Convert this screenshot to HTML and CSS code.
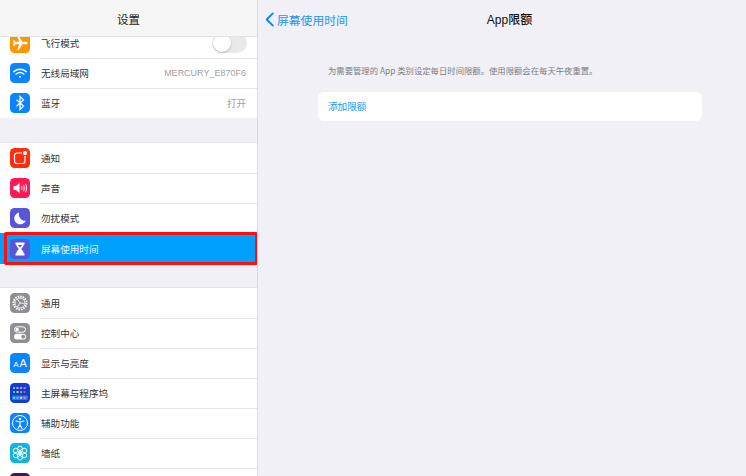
FILE: index.html
```html
<!DOCTYPE html>
<html lang="zh-CN">
<head>
    <meta charset="UTF-8">
    <title>App限额</title>
    <link rel="stylesheet" href="styles.css">
</head>
<body>
    <div class="app">
        <aside class="sidebar">
            <header class="side-head">设置</header>
            <div class="side-list">
                <section class="group">
                    <div class="row">
                        <span class="icon orange">
                            <svg viewBox="0 0 20 20"><path d="M17.600 10c0-.8-.8-1.300-1.700-1.300h-3.500L8.700 3H7.300l1.900 5.700H5.500L4.200 7H3l.7 3-.7 3h1.200l1.300-1.700h3.700L7.300 17h1.400l3.700-5.700h3.500c.9 0 1.700-.5 1.700-1.300z" fill="#fff"/></svg>
                        </span>
                        <span class="label">飞行模式</span>
                        <span class="toggle"><span class="knob"></span></span>
                    </div>
                    <div class="row">
                        <span class="icon blue">
                            <svg viewBox="0 0 20 20" fill="none" stroke="#fff" stroke-width="1.500" stroke-linecap="round"><path d="M3.800 8.600c3.500-3 8.900-3 12.400 0"/><path d="M6.200 11c2.200-1.800 5.400-1.800 7.600 0"/><circle cx="10" cy="13.800" r="1" fill="#fff" stroke="none"/></svg>
                        </span>
                        <span class="label">无线局域网</span>
                        <span class="value ssid">MERCURY_E870F6</span>
                    </div>
                    <div class="row">
                        <span class="icon blue">
                            <svg viewBox="0 0 20 20" fill="none" stroke="#fff" stroke-width="1.300"><path d="M6.500 6.800l7 6.300-3.500 3.400V3.500l3.500 3.400-7 6.300"/></svg>
                        </span>
                        <span class="label">蓝牙</span>
                        <span class="value">打开</span>
                    </div>
                </section>

                <section class="group">
                    <div class="row">
                        <span class="icon red">
                            <svg viewBox="0 0 20 20" fill="none"><rect x="4.500" y="5" width="10.500" height="10.500" rx="2.500" stroke="#fff" stroke-width="1.200"/><circle cx="15" cy="5" r="2.600" fill="#fff" stroke="#ff2d0d"/></svg>
                        </span>
                        <span class="label">通知</span>
                    </div>
                    <div class="row">
                        <span class="icon pink">
                            <svg viewBox="0 0 20 20" fill="none" stroke="#fff"><path d="M3.500 8h2.300l3.700-3v10l-3.700-3H3.500z" fill="#fff" stroke="none"/><path d="M11.500 8c.6 1.300.6 2.700 0 4M13.500 6.800c1 2.100 1 4.300 0 6.400M15.500 5.800c1.400 2.800 1.400 5.600 0 8.400" stroke-width="1"/></svg>
                        </span>
                        <span class="label">声音</span>
                    </div>
                    <div class="row">
                        <span class="icon indigo">
                            <svg viewBox="0 0 20 20"><path d="M9 4.500a6 6 0 1 0 6.800 8.200c-3.900.8-7.700-3-6.800-8.200z" fill="#fff"/></svg>
                        </span>
                        <span class="label">勿扰模式</span>
                    </div>
                    <div class="row active">
                        <span class="icon indigo">
                            <svg viewBox="0 0 20 20"><path d="M5.500 3.500h9v2h-.8c0 2.200-1.700 3.300-2.500 4.500.8 1.200 2.500 2.300 2.500 4.500h.8v2h-9v-2h.8c0-2.200 1.700-3.300 2.500-4.500-.8-1.200-2.500-2.300-2.500-4.500h-.8z" fill="#fff"/><path d="M8 6h4c-.3 1-1.300 1.800-2 2.600C9.300 7.800 8.300 7 8 6z" fill="#5856d6"/></svg>
                        </span>
                        <span class="label">屏幕使用时间</span>
                    </div>
                </section>

                <section class="group">
                    <div class="row">
                        <span class="icon gray">
                            <svg viewBox="0 0 20 20" fill="none" stroke="#fff"><circle cx="10" cy="10" r="6.500" stroke-width="2" stroke-dasharray="1.500 1"/><circle cx="10" cy="10" r="5" stroke-width=".8"/><path d="M10 10L7.500 6M10 10l4.500 .5M10 10l-2.500 4" stroke-width=".8"/></svg>
                        </span>
                        <span class="label">通用</span>
                    </div>
                    <div class="row">
                        <span class="icon gray">
                            <svg viewBox="0 0 20 20" fill="none"><rect x="4.500" y="3.800" width="11" height="5.400" rx="2.700" stroke="#fff"/><circle cx="7.200" cy="6.500" r="1.800" fill="#fff"/><rect x="4" y="10.800" width="12" height="5.800" rx="2.900" fill="#fff"/><circle cx="13.200" cy="13.700" r="1.900" fill="#8e8e93"/></svg>
                        </span>
                        <span class="label">控制中心</span>
                    </div>
                    <div class="row">
                        <span class="icon blue">
                            <span class="aa"><small>A</small>A</span>
                        </span>
                        <span class="label">显示与亮度</span>
                    </div>
                    <div class="row">
                        <span class="icon navy">
                            <svg viewBox="0 0 20 20">
                                <rect x="3" y="4" width="2" height="2" fill="#9ad"/><rect x="6.500" y="4" width="2" height="2" fill="#f9a"/><rect x="10" y="4" width="2" height="2" fill="#c8f"/><rect x="13.500" y="4" width="2" height="2" fill="#f6c"/>
                                <rect x="3" y="8" width="2" height="2" fill="#4cf"/><rect x="6.500" y="8" width="2" height="2" fill="#fc3"/><rect x="10" y="8" width="2" height="2" fill="#3d8"/><rect x="13.500" y="8" width="2" height="2" fill="#f44"/>
                                <rect x="2" y="12.500" width="16" height="4.500" rx="1" fill="#3a6ff0"/><rect x="3" y="13.800" width="2" height="2" fill="#4e9"/><rect x="6.500" y="13.800" width="2" height="2" fill="#4cf"/><rect x="10" y="13.800" width="2" height="2" fill="#ddd"/><rect x="13.500" y="13.800" width="2" height="2" fill="#f93"/>
                            </svg>
                        </span>
                        <span class="label">主屏幕与程序坞</span>
                    </div>
                    <div class="row">
                        <span class="icon blue">
                            <svg viewBox="0 0 20 20" fill="none" stroke="#fff"><circle cx="10" cy="10" r="7.500" stroke-width="1"/><circle cx="10" cy="6" r="1.200" fill="#fff" stroke="none"/><path d="M6 8l4 1 4-1M10 9v3l-2 3.500M10 12l2 3.500" stroke-width="1.200" stroke-linecap="round"/></svg>
                        </span>
                        <span class="label">辅助功能</span>
                    </div>
                    <div class="row">
                        <span class="icon teal">
                            <svg viewBox="0 0 20 20" fill="none" stroke="#fff" stroke-width=".9"><ellipse cx="10" cy="6.500" rx="2.500" ry="3.500"/><ellipse cx="10" cy="13.500" rx="2.500" ry="3.500"/><ellipse cx="6.700" cy="8.200" rx="2.500" ry="3.500" transform="rotate(-60 6.700 8.200)"/><ellipse cx="13.300" cy="8.200" rx="2.500" ry="3.500" transform="rotate(60 13.300 8.200)"/><ellipse cx="6.700" cy="11.800" rx="2.500" ry="3.500" transform="rotate(60 6.700 11.800)"/><ellipse cx="13.300" cy="11.800" rx="2.500" ry="3.500" transform="rotate(-60 13.300 11.800)"/></svg>
                        </span>
                        <span class="label">墙纸</span>
                    </div>
                    <div class="row">
                        <span class="icon dark"></span>
                    </div>
                </section>
            </div>
            <div class="highlight"></div>
        </aside>

        <main class="detail">
            <header class="detail-head">
                <a class="back">
                    <svg viewBox="0 0 10 16" fill="none" stroke="#0a84ff" stroke-width="2" stroke-linecap="round" stroke-linejoin="round"><path d="M8 1.500L1.500 8 8 14.500"/></svg>
                    屏幕使用时间
                </a>
                <h1 class="title">App限额</h1>
            </header>
            <div class="detail-body">
                <p class="note">为需要管理的 App 类别设定每日时间限额。使用限额会在每天午夜重置。</p>
                <div class="card">添加限额</div>
            </div>
        </main>
    </div>
</body>
</html>
```

FILE: styles.css
```css
* {
    margin: 0;
    box-sizing: border-box;
}

body {
    font-family: "Noto Sans CJK SC", "Liberation Sans", sans-serif;
    width: 746px;
    height: 476px;
    overflow: hidden;
    background: #f0f0f6;
}

.app {
    display: flex;
    height: 476px;
}

.sidebar {
    position: relative;
    flex: 0 0 258px;
    height: 476px;
    overflow: hidden;
    background: #f0f0f6;
    border-right: 1px solid #dcdce0;
}

.side-head {
    position: relative;
    z-index: 1;
    height: 37px;
    padding-top: 11px;
    font-size: 11.500px;
    line-height: 16px;
    text-align: center;
    color: #222;
    background: #f6f6f7;
    border-bottom: 1px solid #e4e4e6;
}

.side-list {
    margin-top: -9px;
    display: flex;
    flex-direction: column;
    gap: 24px;
}

.group {
    background: #fff;
    box-shadow: 0 -1px 0 #e4e4e8;
}

.group:first-child {
    margin-bottom: 1px;
}

.row {
    display: flex;
    align-items: center;
    height: 30px;
    padding: 0 6px 0 10px;
    position: relative;
    font-size: 9.600px;
    color: #333;
}

.row + .row::before {
    content: "";
    position: absolute;
    top: 0;
    left: 40px;
    right: 0;
    height: 1px;
    background: #e6e6e8;
}

.row.active {
    height: 31px;
    background: #00a0ff;
    color: #e4f4ff;
}

.row.active::before {
    display: none;
}

.icon {
    flex: 0 0 20px;
    width: 20px;
    height: 20px;
    border-radius: 4.500px;
    display: flex;
    align-items: center;
    justify-content: center;
}

.icon svg {
    width: 20px;
    height: 20px;
}

.orange { background: #ff9500; }
.blue { background: #0a84ff; }
.red { background: #ff2d0d; }
.pink { background: #ff1a55; }
.indigo { background: #5856d6; }
.gray { background: #8e8e93; }
.navy { background: #0f3fd0; }
.teal { background: #12b4dc; }
.dark { background: #3a1a5a; }

.aa {
    font-family: "Liberation Sans", sans-serif;
    font-size: 11px;
    color: #fff;
}

.aa small {
    font-size: 8px;
    margin-right: 1px;
}

.label {
    margin-left: 11px;
    flex: 1;
}

.value {
    color: #a0a0a4;
    font-size: 9.500px;
    margin-right: 5px;
}

.value.ssid {
    font-family: "Liberation Sans", sans-serif;
    font-size: 9px;
}

.toggle {
    width: 35px;
    height: 20px;
    margin-right: 4px;
    border-radius: 10px;
    background: #e9e9eb;
    padding: 1px;
}

.knob {
    display: block;
    width: 18px;
    height: 18px;
    border-radius: 50%;
    background: #fff;
    box-shadow: 0 1px 2px rgba(0, 0, 0, .25);
}

.highlight {
    position: absolute;
    left: 4px;
    top: 232px;
    width: 254px;
    height: 33px;
    border: 3px solid #ff1010;
    border-radius: 2px;
    z-index: 2;
}

.detail {
    flex: 1;
    min-width: 0;
}

.detail-head {
    position: relative;
    height: 38px;
    padding-left: 15px;
    display: flex;
    align-items: center;
    justify-content: center;
}

.back {
    position: absolute;
    left: 7px;
    top: 11px;
    display: flex;
    align-items: center;
    gap: 2px;
    font-size: 11.800px;
    line-height: 17px;
    color: #2196f3;
}

.back svg {
    width: 10px;
    height: 15px;
}

.title {
    font-size: 12px;
    font-weight: 500;
    color: #111;
    font-family: "Liberation Sans", "Noto Sans CJK SC", sans-serif;
    margin-bottom: 1px;
}

.detail-body {
    padding: 26px 44px 0 60px;
}

.note {
    padding-left: 10px;
    font-size: 8.350px;
    line-height: 12px;
    color: #7d7d82;
    white-space: nowrap;
}

.card {
    height: 29.500px;
    margin-top: 15.500px;
    padding-left: 10px;
    font-size: 9.600px;
    line-height: 29px;
    color: #2196f3;
    background: #fff;
    border-radius: 6px;
}
```
